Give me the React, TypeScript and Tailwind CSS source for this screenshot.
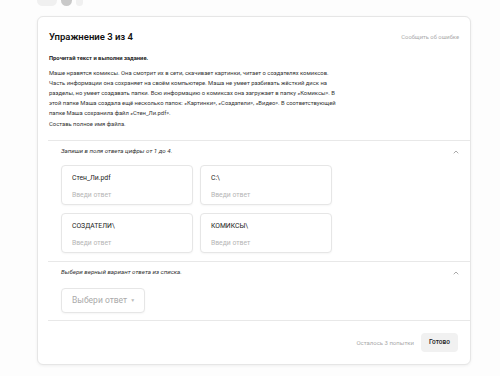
import { ChevronUp } from 'lucide-react';

const FONT = { fontFamily: 'Roboto, "Noto Sans", sans-serif' };

const PARAGRAPH_LINES = [
  'Маше нравятся комиксы. Она смотрит их в сети, скачивает картинки, читает о создателях комиксов.',
  'Часть информации она сохраняет на своём компьютере. Маша не умеет разбивать жёсткий диск на',
  'разделы, но умеет создавать папки. Всю информацию о комиксах она загружает в папку «Комиксы». В',
  'этой папке Маша создала ещё несколько папок: «Картинки», «Создатели», «Видео». В соответствующей',
  'папке Маша сохранила файл «Стен_Ли.pdf».',
];

const ANSWERS = ['Стен_Ли.pdf', 'C:\\', 'СОЗДАТЕЛИ\\', 'КОМИКСЫ\\'];

const AnswerBox = ({ label }: { label: string }) => (
  <div className="flex h-[40px] w-[132px] flex-col rounded-[4px] border border-[#e6e6e6] bg-white pl-[10px] pt-[7px] shadow-[0_1px_2px_rgba(0,0,0,0.04)]">
    <span className="text-[6.8px] leading-[10px] text-[#222]">{label}</span>
    <span className="mt-[7px] text-[6.8px] leading-[10px] text-[#b5b5b5]">Введи ответ</span>
  </div>
);

const SectionHeader = ({ text }: { text: string }) => (
  <div className="flex h-[10px] items-center justify-between pr-[10px]">
    <span className="text-[6.2px] italic text-[#333]">{text}</span>
    <ChevronUp className="h-[8px] w-[8px] text-[#999]" strokeWidth={2.5} />
  </div>
);

export default function App() {
  return (
    <div style={FONT} className="h-[376px] w-[500px] overflow-hidden bg-[#fdfdfd]">
      <div className="-mt-[6px] ml-[37px] flex h-[12px] items-center gap-[4px]">
        <span className="h-[11px] w-[20px] rounded-full bg-[#f0f0f0]" />
        <span className="h-[11px] w-[11px] rounded-full bg-[#c9c9c9]" />
        <span className="h-[11px] w-[7px] rounded-full bg-[#f0f0f0]" />
      </div>

      <div className="ml-[37px] mt-[10px] flex w-[434px] flex-col rounded-[6px] border border-[#e6e6e6] bg-white shadow-[0_1px_3px_rgba(0,0,0,0.06)]">
        <div className="flex items-center justify-between pl-[11px] pr-[11px] pt-[13px]">
          <span className="text-[9.5px] font-semibold leading-[14px] text-[#111]">Упражнение 3 из 4</span>
          <span className="text-[5.8px] text-[#aaa]">Сообщить об ошибке</span>
        </div>

        <div className="mt-[9px] pl-[11px]">
          <p className="text-[5.8px] font-bold leading-[10px] text-[#222]">Прочитай текст и выполни задание.</p>
          <div className="mt-[5px] text-[5.85px] leading-[10px] text-[#333]">
            {PARAGRAPH_LINES.map((line) => (
              <div key={line} className="whitespace-nowrap">
                {line}
              </div>
            ))}
          </div>
          <p className="mt-[1px] text-[5.85px] leading-[10px] text-[#333]">Составь полное имя файла.</p>
        </div>

        <div className="ml-[10px] mt-[11px] border-t border-[#e8e8e8] pl-[13px] pt-[6px]">
          <SectionHeader text="Запиши в поля ответа цифры от 1 до 4." />
          <div className="mt-[8px] grid w-[271px] grid-cols-2 gap-x-[7px] gap-y-[8px]">
            {ANSWERS.map((a) => (
              <AnswerBox key={a} label={a} />
            ))}
          </div>
        </div>

        <div className="ml-[10px] mt-[8px] border-t border-[#e8e8e8] pl-[13px] pt-[6px]">
          <SectionHeader text="Выбери верный вариант ответа из списка." />
          <div className="mt-[10px] flex h-[25px] w-[84px] items-center rounded-[4px] border border-[#e6e6e6] bg-white pl-[10px] shadow-[0_1px_2px_rgba(0,0,0,0.04)]">
            <span className="text-[8.5px] text-[#aaa]">Выбери ответ</span>
            <span className="ml-[3px] text-[5px] text-[#bbb]">▼</span>
          </div>
        </div>

        <div className="ml-[10px] mt-[7px] flex h-[44px] items-center justify-end gap-[7px] border-t border-[#e8e8e8] pr-[12px]">
          <span className="text-[6px] text-[#aaa]">Осталось 3 попытки</span>
          <button
            type="button"
            className="h-[19px] w-[37px] rounded-[4px] bg-[#f1f1f1] text-[6.5px] font-medium text-[#222]"
          >
            Готово
          </button>
        </div>
      </div>
    </div>
  );
}
